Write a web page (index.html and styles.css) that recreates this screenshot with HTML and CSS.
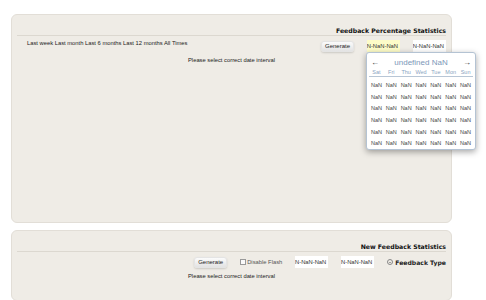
FILE: index.html
```html
<!DOCTYPE html>
<html lang="en">
<head>
  <meta charset="UTF-8" />
  <title>Feedback Statistics</title>
  <link rel="stylesheet" href="styles.css">
</head>
<body>
  <div class="page">
    <section class="panel panel-top">
      <h2 class="panel-title">Feedback Percentage Statistics</h2>
      <div class="toolbar">
        <div class="presets">Last week Last month Last 6 months Last 12 months All Times</div>
        <button class="btn">Generate</button>
        <div class="date-field active"><span>NaN-NaN-NaN</span></div>
        <div class="date-field"><span>NaN-NaN-NaN</span></div>
      </div>
      <p class="notice">Please select correct date interval</p>

      <div class="calendar">
        <div class="cal-head">
          <span class="arrow">&larr;</span>
          <span class="cal-month">undefined NaN</span>
          <span class="arrow">&rarr;</span>
        </div>
        <div class="cal-days">
          <span>Sat</span><span>Fri</span><span>Thu</span><span>Wed</span><span>Tue</span><span>Mon</span><span>Sun</span>
        </div>
        <div class="cal-grid" id="grid"></div>
      </div>
    </section>

    <section class="panel panel-bottom">
      <h2 class="panel-title">New Feedback Statistics</h2>
      <div class="toolbar toolbar-right">
        <button class="btn">Generate</button>
        <label class="check"><span class="box"></span>Disable Flash</label>
        <div class="date-field"><span>NaN-NaN-NaN</span></div>
        <div class="date-field"><span>NaN-NaN-NaN</span></div>
        <div class="type"><span class="drop"></span>Feedback Type</div>
      </div>
      <p class="notice">Please select correct date interval</p>
    </section>
  </div>

  <script>
    // 6 weeks of empty days
    const grid = document.getElementById('grid');
    for (let i = 0; i < 42; i++) {
      const cell = document.createElement('span');
      cell.textContent = 'NaN';
      grid.appendChild(cell);
    }
  </script>
</body>
</html>
```

FILE: styles.css
```css
* {
  box-sizing: border-box;
}

body {
  margin: 0;
  background: #fff;
  font-family: 'DejaVu Sans', sans-serif;
  color: #222;
  font-size: 6px;
}

.page {
  padding: 14px 34px 0 11px;
  display: flex;
  flex-direction: column;
  gap: 7px;
}

.panel {
  position: relative;
  background: #efece6;
  border: 1px solid #e2ded7;
  border-radius: 6px;
  padding: 0 5px;
}

.panel-top {
  height: 209px;
}

.panel-bottom {
  height: 71px;
}

.panel-title {
  margin: 0;
  padding: 12px 0 1px;
  text-align: right;
  font-size: 6.2px;
  font-weight: bold;
  color: #111;
  border-bottom: 1px solid #dcd8d0;
}

.toolbar {
  display: flex;
  align-items: center;
  gap: 13px;
  padding: 4px 0 0;
  height: 16px;
}

.presets {
  flex: 1;
  padding-left: 10px;
  align-self: flex-start;
  font-family: 'Liberation Sans', sans-serif;
  font-size: 5.8px;
  color: #222;
}

.toolbar-right {
  justify-content: flex-end;
}

.toolbar-right .check {
  margin-right: 0;
}

.btn {
  font-family: 'Liberation Sans', sans-serif;
  font-size: 6px;
  color: #222;
  width: 33px;
  height: 11px;
  padding: 0;
  border: 1px solid #e4e4e4;
  border-radius: 3px;
  background: linear-gradient(#fbfbfb, #e3e3e3);
  box-shadow: 0 1px 2px rgba(0, 0, 0, 0.15);
}

.date-field {
  width: 33px;
  height: 12px;
  background: #fff;
  overflow: hidden;
  display: flex;
  align-items: center;
  justify-content: flex-end;
  padding-right: 2px;
  white-space: nowrap;
  font-family: 'Liberation Sans', sans-serif;
  font-size: 5.8px;
  color: #333;
}

.date-field.active {
  background: #fdfcc8;
}

.notice {
  margin: 5px 0 0;
  text-align: center;
  font-family: 'Liberation Sans', sans-serif;
  font-size: 5.8px;
  color: #222;
}

.check {
  display: flex;
  align-items: center;
  gap: 1px;
  font-family: 'Liberation Sans', sans-serif;
  font-size: 5.8px;
  color: #555;
}

.box {
  width: 6px;
  height: 6px;
  border: 1px solid #999;
  background: #fafafa;
}

.type {
  display: flex;
  align-items: center;
  gap: 2px;
  font-size: 6.1px;
  font-weight: bold;
  color: #222;
}

.drop {
  width: 6px;
  height: 6px;
  border: 1px solid #888;
  border-radius: 50%;
  position: relative;
}

.drop::after {
  content: '';
  position: absolute;
  left: 1px;
  top: 1.5px;
  border-left: 1.5px solid transparent;
  border-right: 1.5px solid transparent;
  border-top: 1.5px solid #555;
}

.calendar {
  position: absolute;
  left: 354px;
  top: 37px;
  width: 110px;
  height: 98px;
  background: #fff;
  border: 1px solid #b4c3d3;
  border-radius: 3px;
  box-shadow: 0 2px 6px rgba(0, 0, 0, 0.35);
  padding: 2px 2px 0;
  font-family: 'Liberation Sans', sans-serif;
}

.cal-head {
  display: flex;
  justify-content: space-between;
  align-items: center;
  padding: 0 2px;
  height: 14px;
}

.arrow {
  font-size: 8px;
  color: #333;
}

.cal-month {
  font-size: 8px;
  color: #7c97b8;
}

.cal-days {
  display: grid;
  grid-template-columns: repeat(7, 1fr);
  text-align: center;
  font-size: 5.5px;
  color: #8aa4c2;
  padding-bottom: 1px;
  border-bottom: 1px solid #b8c6d6;
}

.cal-grid {
  display: grid;
  grid-template-columns: repeat(7, 1fr);
  grid-auto-rows: 11.7px;
  padding-top: 2px;
  text-align: center;
  align-items: center;
  font-size: 5.5px;
  color: #444;
}
```
